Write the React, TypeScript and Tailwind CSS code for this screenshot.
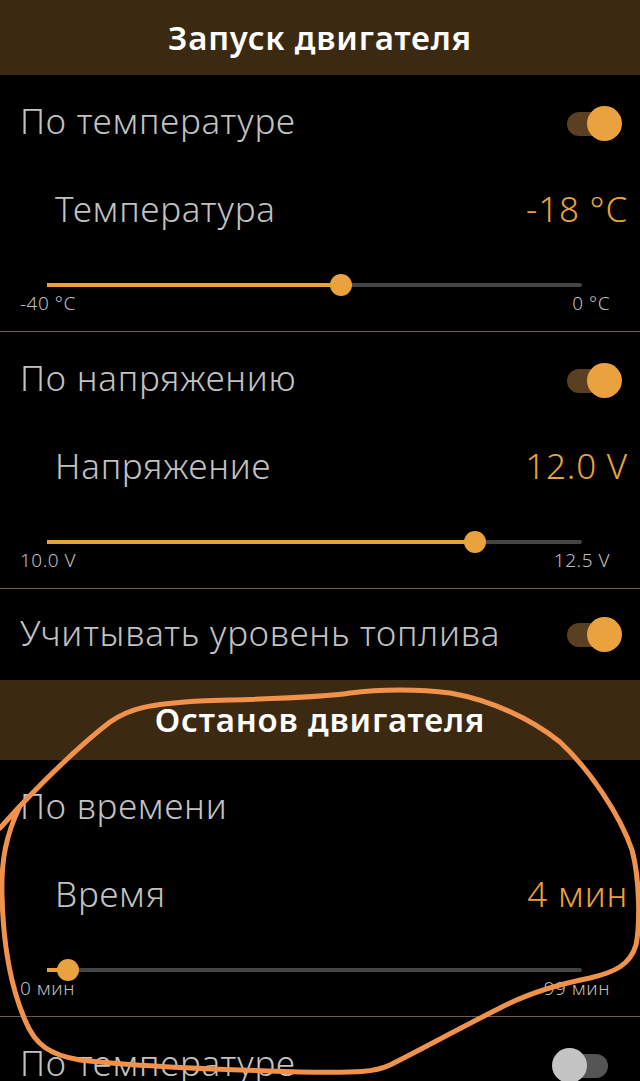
const font = { fontFamily: "'Noto Sans', Roboto, sans-serif" };

interface ToggleProps {
  isOn: boolean;
}

const Toggle = ({ isOn }: ToggleProps) => {
  return (
    <div className="relative w-[70px] h-[35px] shrink-0">
      <div
        className={
          isOn
            ? "absolute left-[15px] top-[6px] w-[41px] h-[24px] rounded-full bg-[#5a4020]"
            : "absolute left-[15px] top-[6px] w-[41px] h-[24px] rounded-full bg-[#555555]"
        }
      />
      <div
        className={
          isOn
            ? "absolute left-[35px] top-0 w-[35px] h-[35px] rounded-full bg-[#eaa23e]"
            : "absolute left-0 top-0 w-[35px] h-[35px] rounded-full bg-[#c4c4c4]"
        }
      />
    </div>
  );
};

const Header = ({ title, tall }: { title: string; tall?: boolean }) => (
  <div
    className={
      tall
        ? "h-[80px] bg-[#3c2912] flex items-center justify-center"
        : "h-[75px] bg-[#3c2912] flex items-center justify-center"
    }
  >
    <span className="text-[33px] font-semibold text-white tracking-[0.8px]">{title}</span>
  </div>
);

const ToggleRow = ({ label, isOn, h = 96 }: { label: string; isOn?: boolean; h?: number }) => (
  <div className={h === 96 ? "h-[96px] flex items-center justify-between pl-5 pr-[18px]" : "h-[91px] flex items-center justify-between pl-5 pr-[18px]"}>
    <span className="text-[35px] font-light text-[#c2c2c2] tracking-[0.8px] -mt-[3px]">{label}</span>
    {isOn !== undefined && <Toggle isOn={isOn} />}
  </div>
);

interface SliderProps {
  label: string;
  value: string;
  ratio: number;
  min: string;
  max: string;
}

const SliderBlock = ({ label, value, ratio, min, max }: SliderProps) => (
  <div>
    <div className="h-[80px] flex items-center justify-between pl-[55px] pr-3">
      <span className="text-[35px] font-light text-[#c2c2c2] tracking-[0.8px] -mt-[3px]">{label}</span>
      <span className="text-[35px] font-light text-[#eaa23e] tracking-[0.8px] -mt-[3px]">{value}</span>
    </div>
    <div className="h-[81px] border-b border-[#6e5c4c]">
      <div className="pt-[23px] pl-[47px] pr-[58px]">
        <div className="relative h-[22px] flex items-center">
          <div className="w-full h-[4px] bg-[#444444] rounded-full" />
          <div
            className="absolute left-0 h-[4px] bg-[#eaa23e]"
            style={{ width: `${ratio * 100}%` }}
          />
          <div
            className="absolute w-[22px] h-[22px] -ml-[11px] rounded-full bg-[#eaa23e]"
            style={{ left: `${ratio * 100}%` }}
          />
        </div>
      </div>
      <div className="-mt-[4px] flex justify-between pl-5 pr-[30px] text-[19px] font-light text-[#bdbdbd] leading-[22px] tracking-[0.5px]">
        <span>{min}</span>
        <span>{max}</span>
      </div>
    </div>
  </div>
);

export default function App() {
  return (
    <div className="relative w-[640px] h-[1081px] overflow-hidden bg-black" style={font}>
      <Header title="Запуск двигателя" />
      <ToggleRow label="По температуре" isOn />
      <SliderBlock label="Температура" value="-18 °C" ratio={0.55} min="-40 °C" max="0 °C" />
      <ToggleRow label="По напряжению" isOn />
      <SliderBlock label="Напряжение" value="12.0 V" ratio={0.8} min="10.0 V" max="12.5 V" />
      <ToggleRow label="Учитывать уровень топлива" isOn h={91} />
      <Header title="Останов двигателя" tall />
      <ToggleRow label="По времени" />
      <SliderBlock label="Время" value="4 мин" ratio={0.04} min="0 мин" max="99 мин" />
      <ToggleRow label="По температуре" isOn={false} />

      <svg
        className="absolute inset-0 pointer-events-none"
        width="640"
        height="1081"
        viewBox="0 0 640 1081"
        fill="none"
      >
        <path
          d="M 0 828 L 20 806 C 40 785, 80 745, 110 722 C 130 708, 150 704, 200 701 C 260 699, 320 698, 350 693 C 380 689, 420 689, 450 693 C 490 700, 530 718, 560 742 C 590 770, 620 815, 632 850 C 640 880, 640 925, 636 945 C 630 965, 615 972, 590 978 C 560 984, 530 992, 500 1008 C 460 1028, 420 1050, 390 1065 C 375 1072, 360 1073, 300 1072 C 230 1070, 130 1066, 80 1060 C 50 1055, 35 1045, 25 1020 C 10 985, 3 940, 2 895 C 1 860, 6 835, 20 806"
          stroke="#f0924c"
          strokeWidth="5"
          strokeLinecap="round"
          strokeLinejoin="round"
        />
      </svg>
    </div>
  );
}
